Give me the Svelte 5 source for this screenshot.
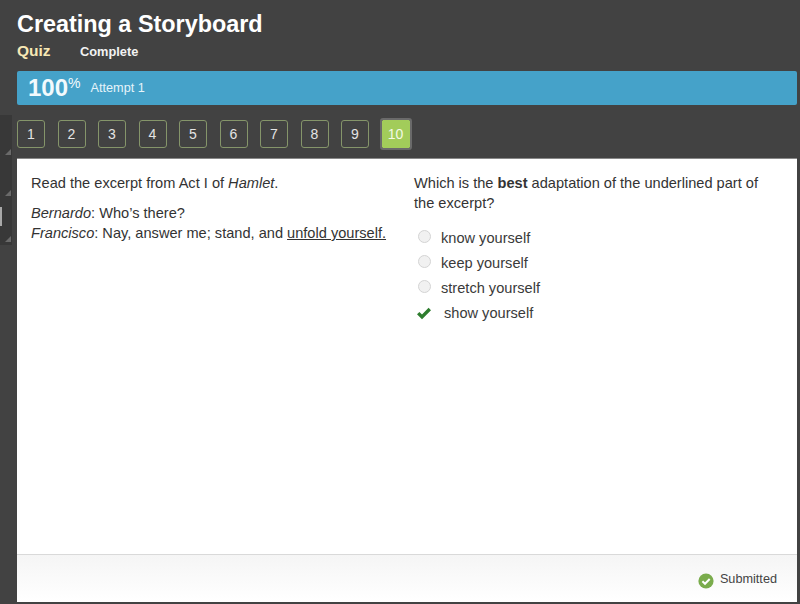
<script>
  const pages = [1, 2, 3, 4, 5, 6, 7, 8, 9, 10];
  const options = ['know yourself', 'keep yourself', 'stretch yourself'];
  const rails = [158, 199, 245];
</script>

<div class="page">
  <aside class="rail">
    {#each rails as bottom}
      <span class="rail-grip" style="top: {bottom - 9}px"></span>
    {/each}
    <span class="rail-tab"></span>
  </aside>

  <header class="head">
    <h1>Creating a Storyboard</h1>
    <div class="sub">
      <span class="kind">Quiz</span>
      <span class="status">Complete</span>
    </div>
  </header>

  <div class="score">
    <span class="pct">100<sup>%</sup></span>
    <span class="attempt">Attempt 1</span>
  </div>

  <nav class="pager">
    {#each pages as n}
      <span class="cell" class:current={n === 10}><span class="num">{n}</span></span>
    {/each}
  </nav>

  <main class="panel">
    <div class="cols">
      <section class="col left">
        <p>Read the excerpt from Act I of <em>Hamlet</em>.</p>
        <p><em>Bernardo</em>: Who’s there?<br />
          <em>Francisco</em>: Nay, answer me; stand, and <u>unfold yourself.</u></p>
      </section>
      <section class="col right">
        <p>Which is the <b>best</b> adaptation of the underlined part of the excerpt?</p>
        <ul>
          {#each options as opt}
            <li><span class="radio"></span>{opt}</li>
          {/each}
          <li class="correct">
            <svg width="16" height="13" viewBox="0 0 16 13"><path d="M1 7.2 L3.4 4.9 L6 7.4 L12.6 .8 L15 3.2 L6 12.2 Z" fill="#2e7d2e" /></svg>
            show yourself
          </li>
        </ul>
      </section>
    </div>
    <footer class="foot">
      <svg width="16" height="16" viewBox="0 0 16 16"><circle cx="8" cy="8" r="7.6" fill="#7aac4c" /><path d="M4.4 8.3 L7 10.8 L11.7 6" fill="none" stroke="#fff" stroke-width="2" /></svg>
      <span>Submitted</span>
    </footer>
  </main>
</div>

<style>
  :global(body) {
    margin: 0;
    background: #424242;
  }

  .page {
    position: relative;
    box-sizing: border-box;
    height: 604px;
    padding: 0 3px 2px 17px;
    display: flex;
    flex-direction: column;
    font-family: "Liberation Sans", Arial, sans-serif;
    overflow: hidden;
  }

  .rail {
    position: absolute;
    left: 0;
    top: 115px;
    width: 12px;
    height: 130px;
    background: #383838;
  }

  .rail-grip {
    position: absolute;
    left: 5px;
    width: 0;
    height: 0;
    margin-top: -115px;
    border-left: 6px solid transparent;
    border-bottom: 6px solid #6a6a6a;
  }

  .rail-tab {
    position: absolute;
    left: 0;
    top: 92px;
    width: 2px;
    height: 19px;
    background: #a8a8a8;
  }

  .head {
    height: 71px;
    box-sizing: border-box;
    padding-top: 10px;
  }

  h1 {
    margin: 0;
    font-size: 23.4px;
    line-height: 29px;
    font-weight: bold;
    color: #fff;
  }

  .sub {
    display: flex;
    align-items: baseline;
    margin-top: 3px;
    line-height: 18px;
  }

  .kind {
    width: 63px;
    font-size: 15.5px;
    font-weight: bold;
    color: #f6e7b4;
  }

  .status {
    font-size: 12.8px;
    font-weight: bold;
    color: #f2f2f2;
  }

  .score {
    height: 34px;
    display: flex;
    align-items: center;
    padding-left: 11px;
    background: #45a2c9;
    border-radius: 2px;
    color: #e6f4fa;
  }

  .pct {
    width: 62.5px;
    font-size: 24px;
    font-weight: bold;
    color: #f2fafd;
  }

  sup {
    font-size: 14px;
    font-weight: normal;
    line-height: 0;
    vertical-align: 8px;
  }

  .attempt {
    font-size: 12.7px;
  }

  .pager {
    height: 53px;
    display: flex;
    align-items: flex-start;
    box-sizing: border-box;
    padding-top: 15px;
    gap: 12.5px;
  }

  .cell {
    box-sizing: border-box;
    width: 28px;
    height: 28px;
    display: flex;
    align-items: center;
    justify-content: center;
    border: 1px solid #85956a;
    border-radius: 3px;
    font-size: 14px;
    color: #e4e4e4;
  }

  .cell.current {
    background: #a2cc5a;
    border-color: #a2cc5a;
    border-radius: 1px;
    color: #f4f9e6;
    outline: 2px solid #6a6a6a;
    outline-offset: 0;
  }

  .panel {
    flex: 1;
    display: flex;
    flex-direction: column;
    background: #fff;
    border-top: 1px solid #888;
    margin-top: 0;
    color: #333;
    font-size: 14.6px;
    line-height: 20px;
  }

  .cols {
    flex: 1;
    display: flex;
  }

  .col {
    box-sizing: border-box;
    padding-top: 14px;
  }

  .left {
    width: 383px;
    padding-left: 14px;
  }

  .right {
    flex: 1;
    padding-left: 14px;
    padding-right: 20px;
  }

  p {
    margin: 0 0 10px;
  }

  ul {
    list-style: none;
    margin: 12px 0 0;
    padding: 0;
  }

  li {
    height: 25px;
    display: flex;
    align-items: center;
    color: #3a3a3a;
  }

  .radio {
    box-sizing: border-box;
    width: 13px;
    height: 13px;
    margin: -2px 10px 0 4px;
    border: 1px solid #d4d4d4;
    border-radius: 50%;
    background: #f1f1f1;
  }

  .correct svg {
    margin: 2px 12px 0 2px;
  }

  .foot {
    height: 48px;
    box-sizing: border-box;
    padding: 15px 20px 0 0;
    display: flex;
    justify-content: flex-end;
    align-items: flex-start;
    gap: 6px;
    background: linear-gradient(#f5f5f5, #ffffff);
    border-top: 1px solid #d9d9d9;
    font-size: 12.7px;
    line-height: 18px;
    color: #444;
  }

  .foot svg {
    margin-top: 3px;
  }
</style>
